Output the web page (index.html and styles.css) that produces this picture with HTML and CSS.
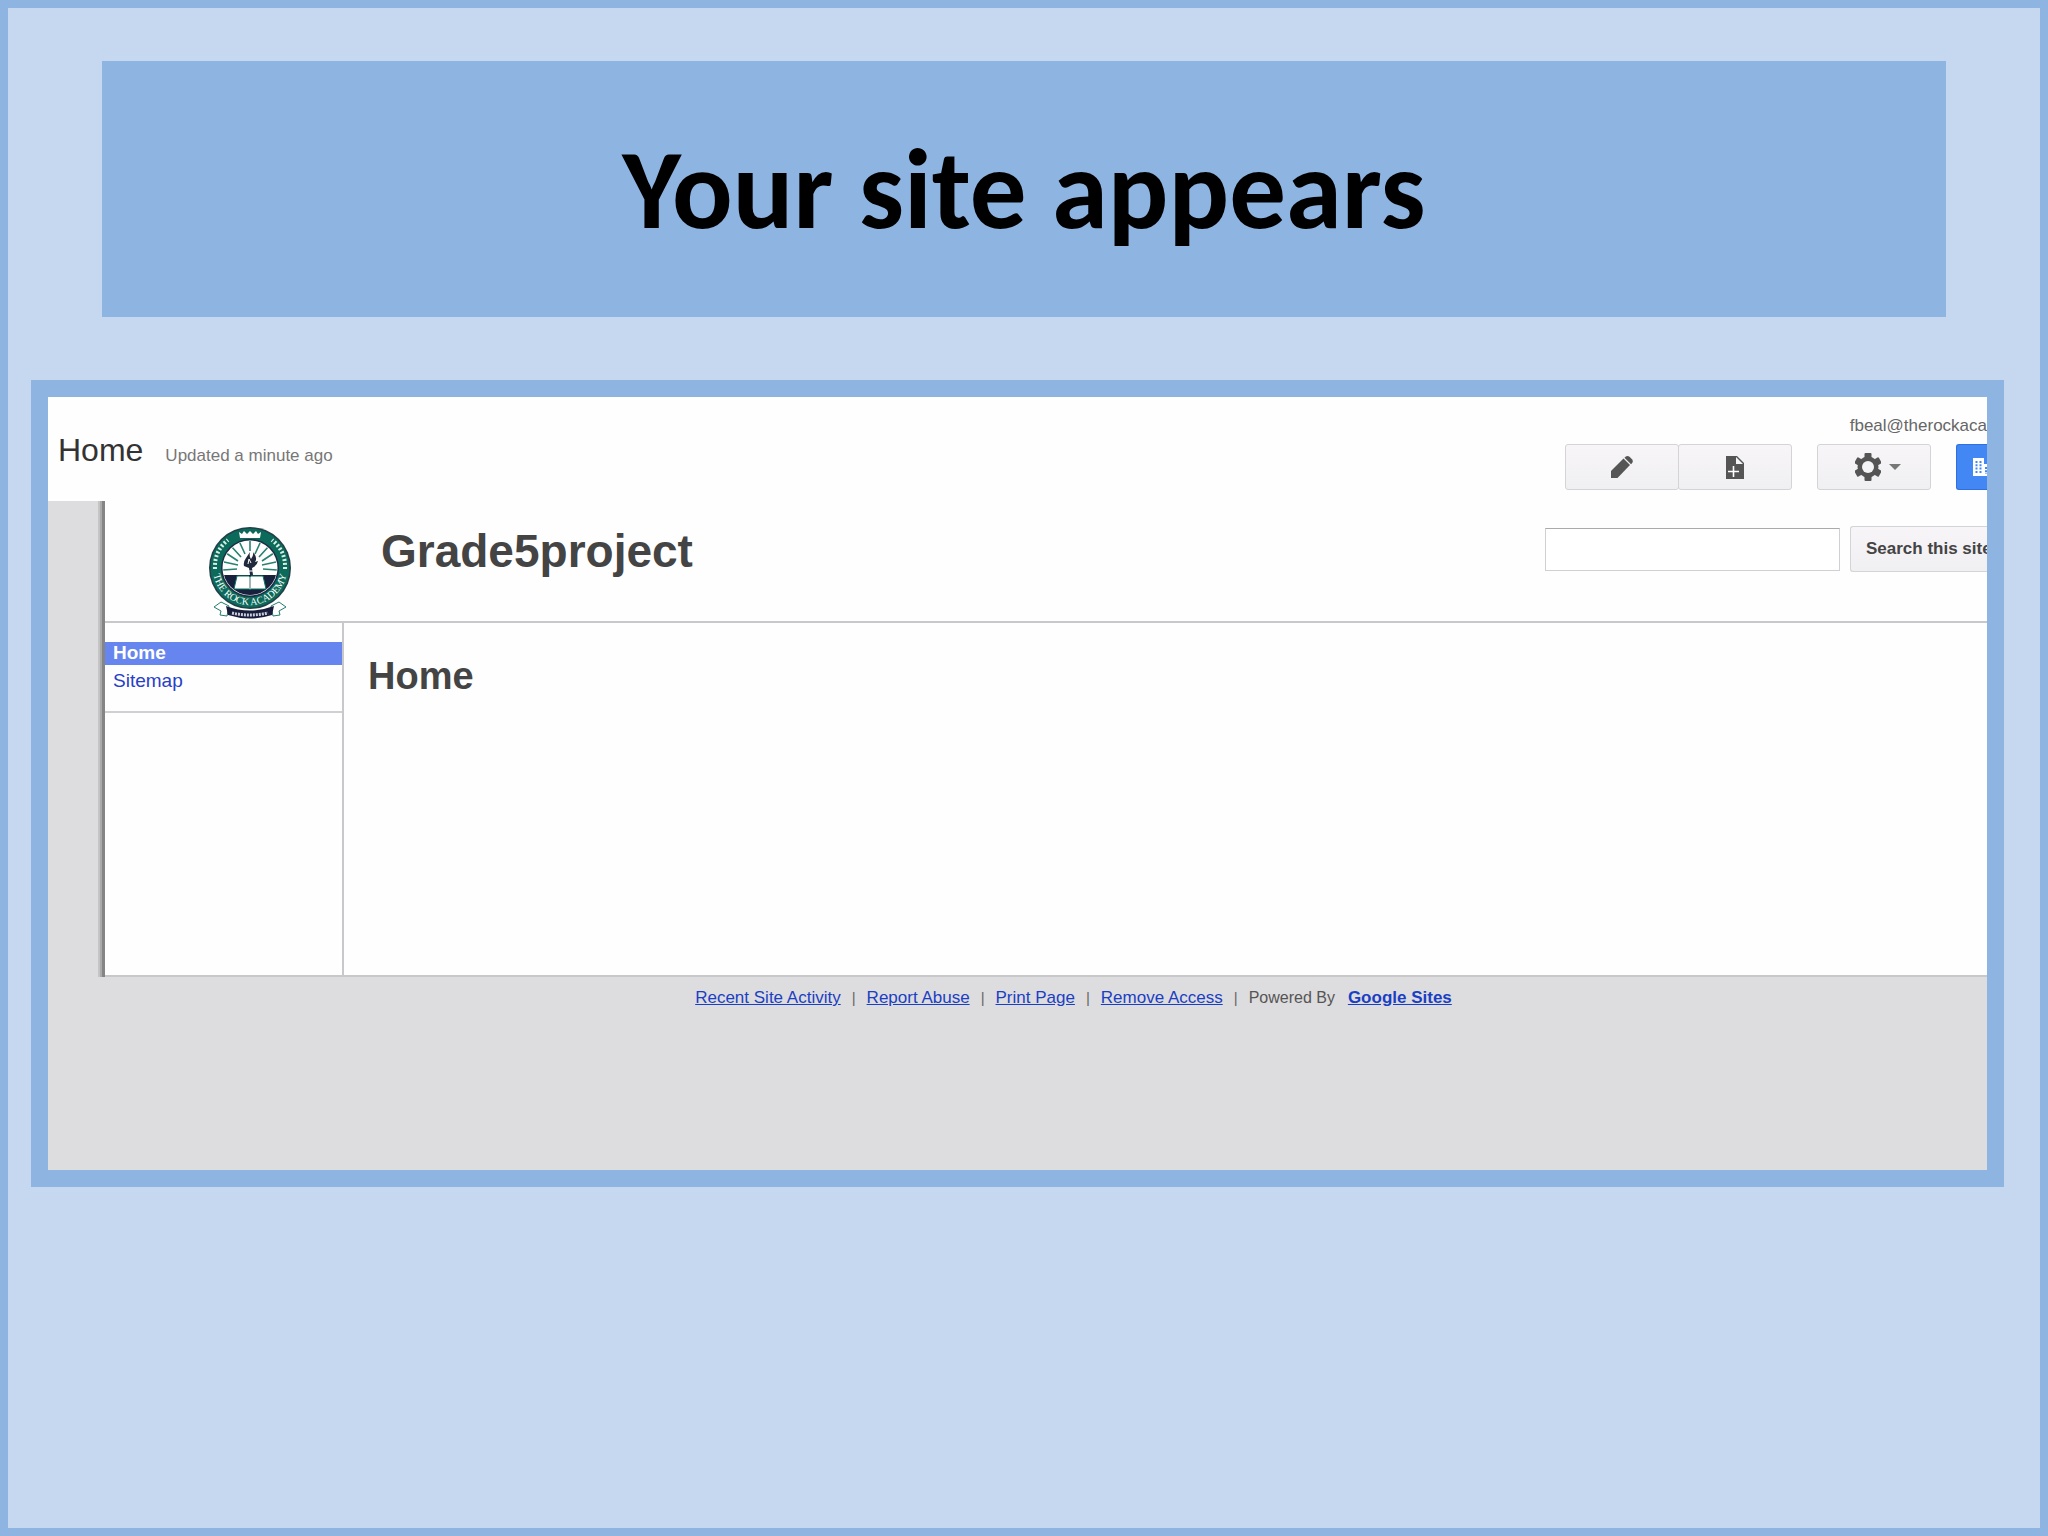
FILE: index.html
```html
<!DOCTYPE html>
<html lang="en">
<head>
    <meta charset="UTF-8">
    <meta name="viewport" content="width=device-width, initial-scale=1.0">
    <title>Your site appears</title>
    <link rel="stylesheet" href="styles.css">
</head>
<body>
    <header class="slide-title">
        <h1>Your site appears</h1>
    </header>

    <main class="frame">
        <!-- editor bar -->
        <div class="topbar">
            <div class="page-info">
                <span class="page-name">Home</span>
                <span class="updated">Updated a minute ago</span>
            </div>
            <div class="account">
                <span class="email">fbeal@therockaca</span>
                <div class="actions">
                    <div class="button-group">
                        <button class="tool" aria-label="Edit page">
                            <svg width="22" height="22" viewBox="0 0 22 22">
                                <path d="M0 22v-7L12.500 2.500l6.500 6.500L6.500 22z" fill="#555"/>
                                <path d="M13.500 1.700 14.500.8q2-1.500 4 0l2.500 2.500q1.500 2 0 4l-1 1z" fill="#555"/>
                            </svg>
                        </button>
                        <button class="tool" aria-label="New page">
                            <svg width="18" height="23" viewBox="0 0 18 23">
                                <path d="M0 0h11l7 7v16H0z" fill="#555"/>
                                <path d="M10 1v7h7z" fill="#f5f4f6"/>
                                <path d="M7.500 10v11M2 15.500h11" stroke="#fff" stroke-width="1.600"/>
                            </svg>
                        </button>
                    </div>
                    <button class="tool gear" aria-label="More actions">
                        <svg width="26" height="28" viewBox="0 0 26 28">
                            <g fill="#555">
                                <rect x="9.500" y="0" width="7" height="28" rx="1"/>
                                <rect x="9.500" y="0" width="7" height="28" rx="1" transform="rotate(60 13 14)"/>
                                <rect x="9.500" y="0" width="7" height="28" rx="1" transform="rotate(120 13 14)"/>
                                <circle cx="13" cy="14" r="10.500"/>
                            </g>
                            <circle cx="13" cy="14" r="6" fill="#f5f4f6"/>
                        </svg>
                        <svg width="12" height="6" viewBox="0 0 12 6">
                            <path d="M0 0h12L6 6z" fill="#777"/>
                        </svg>
                    </button>
                    <button class="share" aria-label="Share">
                        <svg width="22" height="18" viewBox="0 0 22 18">
                            <path d="M0 0h11v6h11v12H0z" fill="#fff"/>
                            <path d="M3.500 3v12M7.500 3v12M13 9v7" stroke="#4387f5" stroke-width="2" stroke-dasharray="2 1.300"/>
                        </svg>
                    </button>
                </div>
            </div>
        </div>

        <div class="canvas">
            <div class="site">
                <div class="site-header">
                    <svg class="logo" width="84" height="92" viewBox="0 0 84 92">
                        <defs>
                            <path id="ring" d="M5 41a37 37 0 0 0 74 0"/>
                            <clipPath id="inner"><circle cx="42" cy="41" r="27"/></clipPath>
                        </defs>
                        <circle cx="42" cy="41" r="41" fill="#233f48"/>
                        <circle cx="42" cy="41" r="39.500" fill="#0b6a5a"/>
                        <circle cx="42" cy="41" r="29" fill="#1e2c45"/>
                        <circle cx="42" cy="41" r="27.500" fill="#fff"/>
                        <g clip-path="url(#inner)">
                            <g stroke="#27826f" stroke-width="1.600">
                                <path d="M30 38 16 35M30 34 18 26M33 30 23 19M37 27 31 14M42 24V13M47 27l6-13M51 30l10-11M54 34l12-8M54 38l14-3M29 42l-14 1M55 42l14 1"/>
                            </g>
                            <path d="M14 48h56v22H14z" fill="#17203d"/>
                            <path d="M29 49h12l1 1 1-1h12l3 13H43l-1 1-1-1H26z" fill="#fff" stroke="#0b7561"/>
                            <path d="M42 50v12" stroke="#4b6c72"/>
                            <path d="M42 48l-1-7-5-2q-1-4 2-8l4-6q-1 5 1 7 3-4 2-7 5 6 2 10l3-1q-1 5-6 7l1 7z" fill="#202a3c"/>
                            <path d="M40 37l1-5 2 4M37 44h10" stroke="#fff" fill="none"/>
                        </g>
                        <path d="M31 5l3 2 2-3 3 3 3-3 3 3 3-3 2 3 3-2-1 6H32z" fill="#fff"/>
                        <path d="M7 42Q6 24 20 13M77 42Q78 24 64 13" fill="none" stroke="#d9eee7" stroke-width="4" stroke-dasharray="2 2"/>
                        <text class="logo-text"><textPath href="#ring" startOffset="50%" text-anchor="middle">THE ROCK ACADEMY</textPath></text>
                        <path d="M6 80l7-5 8 4-2 10-7-1 1-4zM78 80l-7-5-8 4 2 10 7-1-1-4z" fill="#fff" stroke="#247c6b"/>
                        <path d="M18 79q24 9 48 0l-2 9q-22 7-44 0z" fill="#171d3b"/>
                        <path d="M24 86q18 4 36 0" fill="none" stroke="#c9ccda" stroke-width="3" stroke-dasharray="2 1"/>
                    </svg>
                    <h2>Grade5project</h2>
                    <form class="search">
                        <input type="text" aria-label="Search this site">
                        <button type="button">Search this site</button>
                    </form>
                </div>
                <div class="site-body">
                    <nav class="sidebar">
                        <a class="current" href="#">Home</a>
                        <a href="#">Sitemap</a>
                    </nav>
                    <section class="content">
                        <h3>Home</h3>
                    </section>
                </div>
            </div>
            <footer class="footer">
                <a href="#">Recent Site Activity</a>
                <span class="sep">|</span>
                <a href="#">Report Abuse</a>
                <span class="sep">|</span>
                <a href="#">Print Page</a>
                <span class="sep">|</span>
                <a href="#">Remove Access</a>
                <span class="sep">|</span>
                <span class="powered">Powered By</span>
                <a class="brand" href="#">Google Sites</a>
            </footer>
        </div>
    </main>
</body>
</html>
```
FILE: styles.css
```css
* {
    box-sizing: border-box;
}

body {
    margin: 0;
    min-height: 100vh;
    border: 8px solid #8eb4e2;
    background-color: #c6d8f0;
    font-family: "Liberation Sans", Arial, sans-serif;
    color: #444;
}

h1, h2, h3 {
    margin: 0;
}

.slide-title {
    display: flex;
    align-items: center;
    justify-content: center;
    height: 256px;
    margin: 53px 94px 63px;
    background-color: #8eb4e2;
}

.slide-title h1 {
    font-family: Calibri, Carlito, Lato, sans-serif;
    font-size: 113px;
    line-height: 136px;
    color: #000;
}

.frame {
    margin: 0 36px 0 23px;
    border: 17px solid #8eb4e2;
    background-color: #fefefe;
    overflow: hidden;
}

/* editor bar */
.topbar {
    display: flex;
    justify-content: space-between;
    height: 104px;
}

.page-info {
    display: flex;
    align-items: baseline;
    gap: 22px;
    padding: 35px 0 0 10px;
}

.page-name {
    font-size: 32px;
    line-height: 36px;
    color: #333;
}

.updated {
    font-size: 17px;
    color: #777;
}

.account {
    display: flex;
    flex-direction: column;
    align-items: flex-end;
    gap: 6px;
    padding-top: 17px;
}

.email {
    font-size: 17px;
    line-height: 24px;
    color: #666;
}

.actions {
    display: flex;
    gap: 25px;
}

.button-group {
    display: flex;
}

.tool {
    display: flex;
    align-items: center;
    justify-content: center;
    gap: 8px;
    width: 114px;
    height: 46px;
    padding: 0;
    border: 1px solid #d4d3d6;
    border-radius: 3px;
    background: linear-gradient(#f7f5f7, #f0eff2);
}

.button-group .tool + .tool {
    margin-left: -1px;
}

.gear {
    padding-left: 8px;
}

.share {
    width: 31px;
    height: 46px;
    padding: 0 0 0 16px;
    border: 1px solid #2f6fe0;
    border-right: none;
    border-radius: 3px 0 0 3px;
    background-color: #4387f5;
    overflow: hidden;
}

.share svg {
    display: block;
}

/* site preview */
.canvas {
    background-color: #dddcde;
    padding-bottom: 148px;
}

.site {
    margin-left: 57px;
    background-color: #fefefe;
    border-bottom: 2px solid #c8c7ca;
    box-shadow: -3px 0 0 #858585, -5px 0 0 #aaa, -7px 0 0 #c4c4c4;
}

.site-header {
    display: flex;
    align-items: flex-start;
    height: 122px;
    border-bottom: 2px solid #c8c8ca;
}

.logo {
    margin: 26px 89px 0 103px;
}

.logo-text {
    font-family: "Liberation Serif", serif;
    font-size: 10px;
    fill: #fff;
}

.site-header h2 {
    padding-top: 24px;
    font-size: 46px;
    line-height: 52px;
}

.search {
    display: flex;
    align-items: center;
    gap: 10px;
    margin-left: auto;
    padding-top: 25px;
}

.search input {
    width: 295px;
    height: 43px;
    border: 1px solid #d0cfd2;
    border-top-color: #aaa;
    background-color: #fff;
}

.search button {
    width: 137px;
    height: 46px;
    padding: 0 0 0 15px;
    border: 1px solid #d4d3d6;
    border-right: none;
    border-radius: 3px 0 0 3px;
    background: linear-gradient(#f7f5f7, #f0eff2);
    font: bold 17px "Liberation Sans", Arial, sans-serif;
    color: #444;
    text-align: left;
    white-space: nowrap;
    overflow: hidden;
}

.site-body {
    display: flex;
    height: 352px;
}

.sidebar {
    width: 239px;
    padding-top: 19px;
    border-right: 2px solid #c8c8ca;
}

.sidebar a {
    display: block;
    padding: 0 0 2px 8px;
    font-size: 19px;
    line-height: 21px;
    color: #2740c8;
    text-decoration: none;
}

.sidebar a.current {
    background-color: #6785ee;
    font-weight: bold;
    color: #fff;
}

.sidebar a:last-child {
    padding-top: 5px;
    padding-bottom: 20px;
    border-bottom: 2px solid #d0d0d2;
}

.content {
    padding: 31px 24px;
}

.content h3 {
    font-size: 38px;
    line-height: 44px;
}

.footer {
    display: flex;
    align-items: baseline;
    justify-content: center;
    gap: 11px;
    padding: 11px 0 14px 112px;
    font-size: 17px;
    line-height: 20px;
    white-space: nowrap;
}

.footer a {
    color: #1a3fc4;
}

.sep {
    font-size: 15px;
    color: #666;
}

.powered {
    font-size: 16px;
    color: #555;
}

.footer .brand {
    margin-left: 2px;
    font-weight: bold;
}
```
